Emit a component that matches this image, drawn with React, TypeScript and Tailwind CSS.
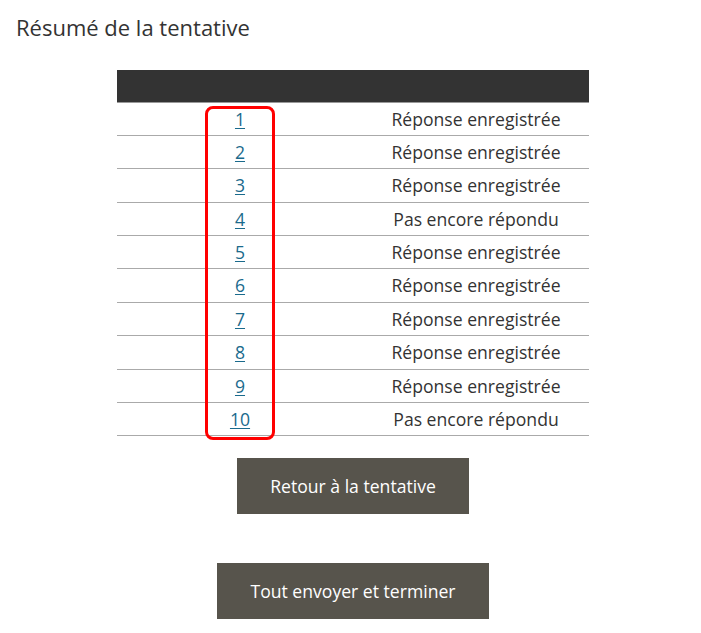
const rows = [
  "Réponse enregistrée",
  "Réponse enregistrée",
  "Réponse enregistrée",
  "Pas encore répondu",
  "Réponse enregistrée",
  "Réponse enregistrée",
  "Réponse enregistrée",
  "Réponse enregistrée",
  "Réponse enregistrée",
  "Pas encore répondu",
];

export default function App() {
  return (
    <main className="min-h-screen w-full bg-white pt-[12px] text-[#333] [font-family:'Open_Sans',sans-serif]">
      <h2 className="pl-4 text-[22px] leading-[30px]">Résumé de la tentative</h2>

      <div className="relative ml-[117px] mt-[28px] w-[472px]">
        <table className="w-full border-collapse text-[17.6px]">
          <thead>
            <tr className="h-[32px] border-b border-[#999] bg-[#333]">
              <th className="w-[246px]" />
              <th />
            </tr>
          </thead>
          <tbody>
            {rows.map((status, i) => (
              <tr key={i} className="h-[33.4px] border-b border-[#aaa]">
                <td className="p-0 text-center">
                  <a href="#" className="text-[#1a6a8c] underline underline-offset-2">
                    {i + 1}
                  </a>
                </td>
                <td className="p-0 text-center">{status}</td>
              </tr>
            ))}
          </tbody>
        </table>
        <div className="pointer-events-none absolute left-[88px] top-[36px] h-[334px] w-[70px] rounded-[8px] border-[3px] border-[#ff0000]" />
      </div>

      <div className="ml-[117px] flex w-[472px] flex-col items-center">
        <button className="mt-[22px] h-[56px] bg-[#57544c] px-[33px] text-[17.6px] text-white">
          Retour à la tentative
        </button>
        <button className="mt-[49px] h-[56px] bg-[#57544c] px-[33px] text-[17.6px] text-white">
          Tout envoyer et terminer
        </button>
      </div>
    </main>
  );
}
